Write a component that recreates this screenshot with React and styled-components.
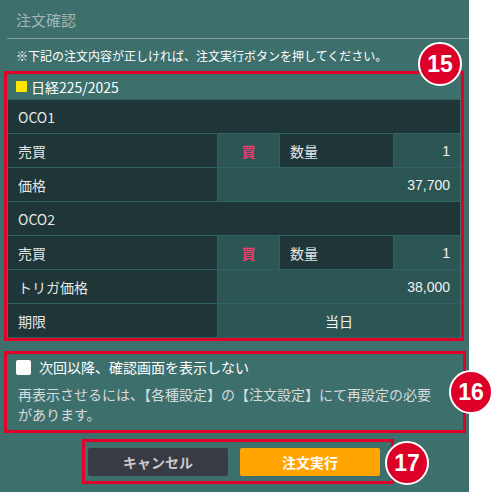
import styled, { createGlobalStyle } from "styled-components";

const GlobalStyle = createGlobalStyle`
  body {
    margin: 0;
    background: #ffffff;
    font-family: "Noto Sans CJK JP", "Noto Sans", sans-serif;
  }
`;

const rows = [
  { type: "head", label: "OCO1" },
  { type: "side", label: "売買", qty: "1" },
  { type: "value", label: "価格", value: "37,700" },
  { type: "head", label: "OCO2" },
  { type: "side", label: "売買", qty: "1" },
  { type: "value", label: "トリガ価格", value: "38,000" },
  { type: "center", label: "期限", value: "当日" },
];

export default function App() {
  return (
    <>
      <GlobalStyle />
      <Panel>
        <Title>注文確認</Title>
        <Note>※下記の注文内容が正しければ、注文実行ボタンを押してください。</Note>
        <Frame>
          <Product>
            <Mark />
            日経225/2025
          </Product>
          <Table>
            {rows.map((r, i) => {
              if (r.type === "head") return <HeadCell key={i}>{r.label}</HeadCell>;
              if (r.type === "side")
                return [
                  <Label key={i + "a"}>{r.label}</Label>,
                  <Side key={i + "b"}>買</Side>,
                  <Label key={i + "c"}>数量</Label>,
                  <Value key={i + "d"}>{r.qty}</Value>,
                ];
              return [
                <Label key={i + "a"}>{r.label}</Label>,
                <Value key={i + "b"} $span $center={r.type === "center"}>
                  {r.value}
                </Value>,
              ];
            })}
          </Table>
        </Frame>
        <OptionFrame>
          <CheckRow>
            <Check />
            次回以降、確認画面を表示しない
          </CheckRow>
          <Hint>再表示させるには、【各種設定】の【注文設定】にて再設定の必要があります。</Hint>
        </OptionFrame>
        <ButtonFrame>
          <Button>キャンセル</Button>
          <Button $primary>注文実行</Button>
        </ButtonFrame>
        <Badge $x={418} $y={42}>15</Badge>
        <Badge $x={449} $y={370}>16</Badge>
        <Badge $x={385} $y={441}>17</Badge>
      </Panel>
    </>
  );
}

const Panel = styled.div`
  position: relative;
  width: 469px;
  height: 492px;
  background: #3d706d;
  display: flex;
  flex-direction: column;
`;

const Title = styled.div`
  height: 38px;
  margin-left: 7px;
  padding-left: 9px;
  display: flex;
  align-items: center;
  font-size: 15px;
  color: #a3b6b4;
  border-bottom: 1px solid #8c9e9c;
`;

const Note = styled.div`
  height: 32px;
  padding-left: 16px;
  display: flex;
  align-items: center;
  font-size: 12px;
  color: #ffffff;
`;

const Frame = styled.div`
  margin-left: 4px;
  width: 453px;
  border: 3px solid #e2002b;
  padding-left: 1px;
`;

const Product = styled.div`
  height: 25px;
  display: flex;
  align-items: center;
  gap: 4px;
  padding-left: 8px;
  font-size: 14px;
  color: #ffffff;
`;

const Mark = styled.span`
  width: 11px;
  height: 11px;
  border-radius: 1px;
  background: #ffe600;
`;

const Table = styled.div`
  display: grid;
  grid-template-columns: 209px 61px 113px 66px;
  grid-auto-rows: 33px;
  gap: 1px;
  background: #2f6361;
  border-top: 1px solid #2f6361;
  border-bottom: 1px solid #2f6361;
  width: 452px;
  font-size: 14px;
`;

const Cell = styled.div`
  display: flex;
  align-items: center;
  padding: 0 10px;
  color: #e6e6e6;
`;

const HeadCell = styled(Cell)`
  grid-column: 1 / -1;
  background: #1e3638;
`;

const Label = styled(Cell)`
  background: #1e3638;
`;

const Side = styled(Cell)`
  background: #2c5654;
  justify-content: center;
  color: #ec3b6c;
  font-weight: bold;
`;

const Value = styled(Cell)`
  background: #2c5654;
  justify-content: ${(p) => (p.$center ? "center" : "flex-end")};
  grid-column: ${(p) => (p.$span ? "2 / -1" : "auto")};
  color: #f2f2f2;
  font-family: ${(p) => (p.$center ? "inherit" : '"Liberation Sans", Arial, sans-serif')};
`;

const OptionFrame = styled.div`
  margin: 10px 0 0 4px;
  width: 447px;
  height: 73px;
  border: 3px solid #e2002b;
  padding: 3px 0 0 9px;
`;

const CheckRow = styled.label`
  display: flex;
  align-items: center;
  gap: 8px;
  height: 20px;
  font-size: 14px;
  color: #ffffff;
`;

const Check = styled.span`
  width: 15px;
  height: 15px;
  border-radius: 2px;
  background: #ffffff;
`;

const Hint = styled.p`
  margin: 7px 0 0 2px;
  width: 424px;
  font-size: 14px;
  line-height: 20px;
  color: #d5dcdb;
`;

const ButtonFrame = styled.div`
  margin: 6px 0 0 82px;
  width: 303px;
  height: 39px;
  border: 3px solid #e2002b;
  display: flex;
  align-items: center;
  gap: 12px;
  padding-left: 3px;
`;

const Button = styled.button`
  width: 140px;
  height: 28px;
  border: none;
  border-radius: 2px;
  font-family: inherit;
  font-size: 14px;
  font-weight: bold;
  background: ${(p) => (p.$primary ? "#ffa400" : "#393b44")};
  color: ${(p) => (p.$primary ? "#ffffff" : "#c9c9c9")};
`;

const Badge = styled.div`
  position: absolute;
  left: ${(p) => p.$x}px;
  top: ${(p) => p.$y}px;
  width: 40px;
  height: 40px;
  border-radius: 50%;
  border: 2px solid #ffffff;
  background: #dc0029;
  color: #ffffff;
  display: flex;
  align-items: center;
  justify-content: center;
  font-family: "Liberation Sans", Arial, sans-serif;
  font-weight: bold;
  font-size: 23px;
`;
